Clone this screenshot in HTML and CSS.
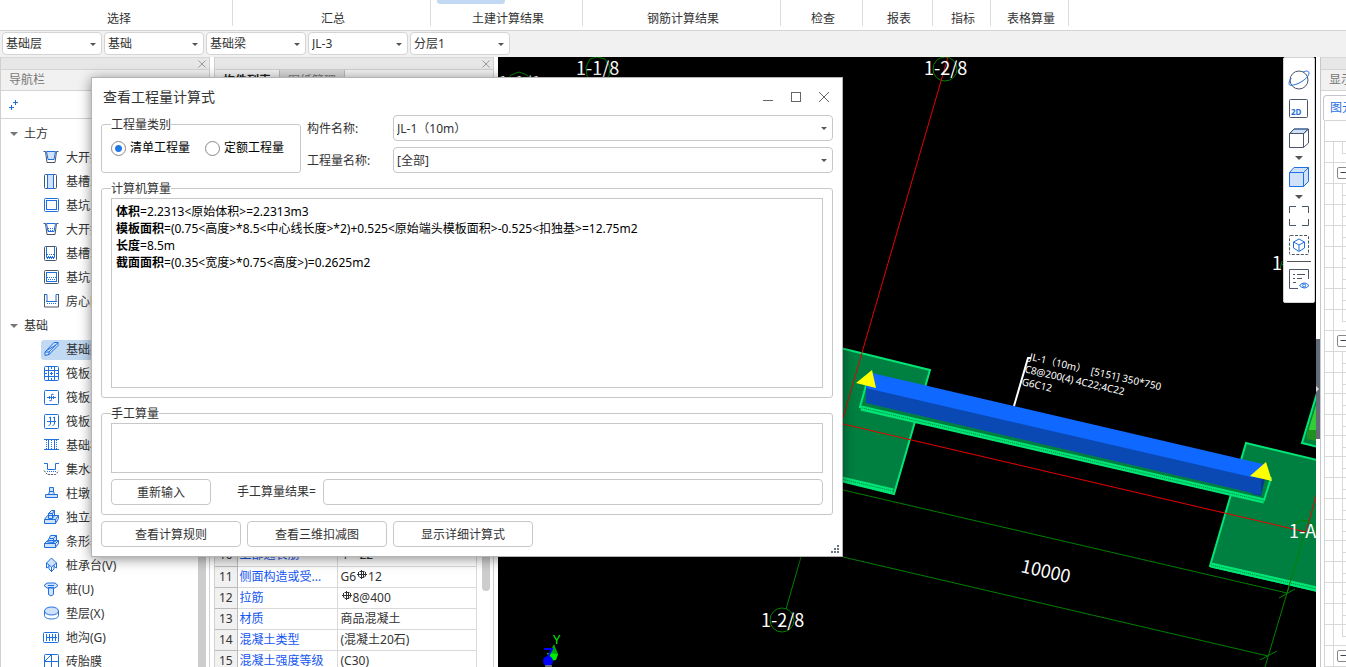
FILE: index.html
```html
<!DOCTYPE html>
<html lang="zh-CN">
<head>
<meta charset="utf-8">
<title>查看工程量计算式</title>
<link rel="stylesheet" href="styles.css">
</head>
<body>
<header class="ribbon">
  <div class="group g-select"><span>选择</span></div>
  <div class="group g-wide"><span>汇总</span></div>
  <div class="group g-civil"><i class="group-active"></i><span>土建计算结果</span></div>
  <div class="group g-wide"><span>钢筋计算结果</span></div>
  <div class="group g-check"><span>检查</span></div>
  <div class="group g-report"><span>报表</span></div>
  <div class="group g-index"><span>指标</span></div>
  <div class="group g-table"><span>表格算量</span></div>
</header>

<div class="filters">
  <span class="select"><select aria-label="楼层"><option>基础层</option></select></span>
  <span class="select"><select aria-label="构件大类"><option>基础</option></select></span>
  <span class="select"><select aria-label="构件类型"><option>基础梁</option></select></span>
  <span class="select"><select aria-label="构件"><option>JL-3</option></select></span>
  <span class="select"><select aria-label="分层"><option>分层1</option></select></span>
</div>

<main class="workspace">
  <aside class="nav">
    <div class="strip"><button class="strip-close" aria-label="关闭"><svg width="8" height="8" viewBox="0 0 8 8"><path d="M.5.5l7 7M7.5.5l-7 7"/></svg></button></div>
    <div class="panel-title">导航栏</div>
    <div class="nav-tools"><button aria-label="展开"><svg width="10" height="10" viewBox="0 0 10 10"><path d="M6.500 0v5M4 2.500h5M2.500 5v5M0 7.500h5" fill="none" stroke="#1a6fe0"/></svg></button></div>
    <div class="nav-body">
      <ul class="tree">
        <li class="branch"><i class="caret"></i>土方</li>
        <li><button class="leaf"><svg viewBox="0 0 16 16"><path class="d" d="M.5 2.500h2l1.500 11h8l1.500-11h2"/><path class="f" d="M3.500 2.500h9l-1.500 8h-6z"/></svg>大开挖土方</button></li>
        <li><button class="leaf"><svg viewBox="0 0 16 16"><rect class="d" x="1.500" y="1.500" width="12" height="14" rx="1"/><path class="f" d="M4.500 1.500h6v14h-6z"/></svg>基槽土方</button></li>
        <li><button class="leaf"><svg viewBox="0 0 16 16"><rect class="b t" x="1.500" y="1.500" width="14" height="13" rx="1"/><rect class="b" x="3.500" y="3.500" width="10" height="9"/></svg>基坑土方</button></li>
        <li><button class="leaf"><svg viewBox="0 0 16 16"><path class="d" d="M.5 2.500h2l1.500 11h8l1.500-11h2"/><path class="b" d="M3.500 2.500h9l-1.500 8h-6z"/><path class="dots" d="M5 7.500h7M5 9.500h6"/></svg>大开挖灰土</button></li>
        <li><button class="leaf"><svg viewBox="0 0 16 16"><rect class="d" x="1.500" y="1.500" width="12" height="14" rx="1"/><path class="b" d="M3.500 1.500v11h8v-11"/><path class="dots" d="M4 9.500h8M5 11.500h7M4 13.500h8"/></svg>基槽灰土</button></li>
        <li><button class="leaf"><svg viewBox="0 0 16 16"><rect class="d" x="1.500" y="1.500" width="14" height="13" rx="1"/><rect class="b" x="3.500" y="3.500" width="10" height="9"/><path class="dots" d="M4 8.500h9M5 10.500h8M4 12.500h9"/></svg>基坑灰土</button></li>
        <li><button class="leaf"><svg viewBox="0 0 16 16"><path class="d" d="M1.500 1v13h14V1"/><path class="b" d="M2 1.500h2v7h9v-7h2"/><path class="dots" d="M3 8.500h11M4 10.500h10"/></svg>房心回填</button></li>
        <li class="branch"><i class="caret"></i>基础</li>
        <li><button class="leaf active"><svg viewBox="0 0 16 16"><path class="f" d="M2 11l9-9.500h4v3L6 13.500l-4 1z"/><path class="b" d="M2 11h4v3M6 11l9-9.500M3.500 9.500L13 4"/></svg>基础梁</button></li>
        <li><button class="leaf"><svg viewBox="0 0 16 16"><rect class="b" x="1.500" y="1.500" width="14" height="14" rx="1"/><path class="b" d="M5.500 2v13M11.500 2v13M1 5.500h14M1 11.500h14M8.500 2v2M8.500 7v3M8.500 13v2M2 8.500h2M7 8.500h3M13 8.500h2"/></svg>筏板基础</button></li>
        <li><button class="leaf"><svg viewBox="0 0 16 16"><rect class="b" x="1.500" y="1.500" width="14" height="14" rx="1"/><path class="b" d="M4 8.500h9M10.500 5.500q-2-1.500-2 1v4q0 2.500-2 1M6.500 7v3M10.500 7v3"/></svg>筏板主筋</button></li>
        <li><button class="leaf"><svg viewBox="0 0 16 16"><rect class="b" x="1.500" y="1.500" width="14" height="14" rx="1"/><path class="b" d="M4 8.500h9M6 5l1.500-1v7l-2 2M10 5l1.500-1v7l-2 2"/></svg>筏板负筋</button></li>
        <li><button class="leaf"><svg viewBox="0 0 16 16"><path class="b" d="M1 2.500h15M1 12.500h15M5.500 3v10M11.500 3v10"/><path class="dots" d="M3.500 3v9M8.500 3v9M13.500 3v9"/></svg>基础板带</button></li>
        <li><button class="leaf"><svg viewBox="0 0 16 16"><path class="b" d="M1 2.500h3.500v6h8v-6H16"/><path class="d" d="M1 9.500l3.500 4h8l3.500-4" stroke-dasharray="2 1"/><path class="dots" d="M4 10.500h9"/></svg>集水坑</button></li>
        <li><button class="leaf"><svg viewBox="0 0 16 16"><path class="f" d="M2.500 9.500h12v3h-12zM5.500 9.500l1-3h4l1 3zM6.500 2.500h4v4h-4z"/></svg>柱墩</button></li>
        <li><button class="leaf"><svg viewBox="0 0 16 16"><path class="f" d="M1.500 10.500l3-4h11v3l-3 5h-11zM5.500 9.500v-5l3-3h3v5l-2 3z"/><path class="b" d="M1.500 10.500h11l3-4M12.500 10.500v4M9.500 9.500v-5l2-3M5.500 4.500h4"/></svg>独立基础</button></li>
        <li><button class="leaf"><svg viewBox="0 0 16 16"><path class="f" d="M1.500 10.500l3-3h11v3l-3 4h-11zM4.500 9l3-6.500h6v5l-3 2z"/><path class="b" d="M1.500 10.500h11l3-3M12.500 10.500v4M6.500 5.500h4l3-3M10.500 5.500v4"/></svg>条形基础</button></li>
        <li><button class="leaf"><svg viewBox="0 0 16 16"><path class="f" d="M8.500 1l5 5-5 4-5-4z"/><path class="b" d="M3.500 6v5l2.500-1.500M13.500 6v5L11 9.500M8.500 10v5M6 8v4l2.500 2.500L11 12V8"/></svg>桩承台(V)</button></li>
        <li><button class="leaf"><svg viewBox="0 0 16 16"><path class="f" d="M1 4.500l3-2.500h8l3 2.500-3 2.500H4zM5.500 6.500h5v7l-2.500 1.500-2.500-1.500z"/><path class="b" d="M5 4.500h6"/></svg>桩(U)</button></li>
        <li><button class="leaf"><svg viewBox="0 0 16 16"><path class="b" d="M1.500 6v4.500c0 2 3 3.500 7 3.500s7-1.500 7-3.500V6"/><ellipse class="f" cx="8.500" cy="6" rx="7" ry="4"/></svg>垫层(X)</button></li>
        <li><button class="leaf"><svg viewBox="0 0 16 16"><rect class="b" x=".5" y="3.500" width="15" height="10" rx="1"/><path class="b" d="M3 8.500h11M3.500 5v7M6.500 5v7M9.500 5v7M12.500 5v7"/></svg>地沟(G)</button></li>
        <li><button class="leaf"><svg viewBox="0 0 16 16"><rect class="b" x="1.500" y="1.500" width="14" height="14" rx="1"/><path class="b" d="M8.500 1v14M1 8.500h15M2 8l6-6"/></svg>砖胎膜</button></li>
      </ul>
      <div class="nav-scroll"></div>
    </div>
  </aside>

  <section class="props">
    <div class="strip"><button class="strip-close" aria-label="关闭"><svg width="8" height="8" viewBox="0 0 8 8"><path d="M.5.5l7 7M7.500.5l-7 7"/></svg></button></div>
    <div class="tabs"><button class="tab on">构件列表</button><button class="tab">图纸管理</button></div>
    <div class="component-list"></div>
    <div class="table-wrap">
      <table>
        <tbody>
          <tr><th>10</th><td class="name">上部通长筋</td><td>4<svg class="rebar" viewBox="0 0 10 10"><path d="M2.500 1.500h5M0 4.500h10M1.500 2v4l1.500 1.500h4l1.500-1.500v-4M4.500 0v9M6.500 1v6"/></svg>22</td></tr>
          <tr><th>11</th><td class="name">侧面构造或受...</td><td>G6<svg class="rebar" viewBox="0 0 10 10"><path d="M2.500 1.500h5M0 4.500h10M1.500 2v4l1.500 1.500h4l1.500-1.500v-4M4.500 0v9M6.500 1v6"/></svg>12</td></tr>
          <tr><th>12</th><td class="name">拉筋</td><td><svg class="rebar" viewBox="0 0 10 10"><path d="M2.500 1.500h5M0 4.500h10M1.500 2v4l1.500 1.500h4l1.500-1.500v-4M4.500 0v9M6.500 1v6"/></svg>8@400</td></tr>
          <tr><th>13</th><td class="name">材质</td><td>商品混凝土</td></tr>
          <tr><th>14</th><td class="name">混凝土类型</td><td>(混凝土20石)</td></tr>
          <tr><th>15</th><td class="name">混凝土强度等级</td><td>(C30)</td></tr>
        </tbody>
      </table>
      <div class="table-scroll"></div>
    </div>
  </section>

  <section class="canvas">
    <svg class="scene" viewBox="498 57 818 610" preserveAspectRatio="xMinYMin slice">
      <g class="axis-green">
        <path d="M843 490L1287 593M843 557L1268 656M801 557L786 609M1305 532L1287 593L1265 667M1279 598L1295 589M1260 660L1277 651"/>
        <path d="M590 59l7-2 8 2 5 8-1 9-7 5h-9l-6-5-1-9zM511 75l8-3 8 3 5 7-1 9h-24l-1-9z"/>
        <circle cx="945" cy="69" r="12"/>
      </g>
      <g class="slab">
        <path d="M820 343L930 370L894 494L820 476z"/>
        <path d="M1246 443L1330 463V594L1210 566z"/>
        <path d="M1330 350L1302 443L1330 450z"/>
      </g>
      <path d="M1316 405v30h-9z" fill="#33cc33"/><path d="M1308 430h8v11l-9-2z" fill="#219021"/>
      <g class="rim"><path d="M820 474L893 491M1211 565L1330 592"/></g>
      <g class="rim-dots"><path d="M820 474L893 491M1211 565L1330 592"/></g>
      <path class="foot" d="M868 378L860 407L1264 500L1271 478z"/>
      <path class="rim" d="M861 408L1264 501"/>
      <path class="rim-dots" d="M862 408L1264 501"/>
      <path d="M866 386L1254 476L1261 495L866 403z" fill="#0a48b4"/>
      <path d="M1252 475L1267 470L1261 496L1252 494z" fill="#083a94"/>
      <path d="M1250 475h11v20l-11-2z" fill="#0a48b4"/>
      <path d="M872 373L1267 465L1262 478L1251 477L866 388z" fill="#0f68ff"/>
      <path d="M856 383L872 370L876 388zM1250 476L1266 462L1272 481z" fill="#ff0"/>
      <path d="M948 57L843 418M843 424L1306 532L1320 482" stroke="#e80000" fill="none"/>
      <path class="axis-green" d="M1293 525q10-10 20 0M1305 532L1287 593"/>
      <circle class="axis-green" cx="782" cy="620" r="12"/>
      <path class="axis-green" d="M1282 261l-2 8"/>
      <path d="M1031 358h-3L1014 406" stroke="#fff" stroke-width="2" fill="none"/>
      <g class="cad">
        <text x="576" y="75">1-1/8</text>
        <text x="498" y="90">1-1/1</text>
        <text x="924" y="75">1-2/8</text>
        <text x="761" y="627">1-2/8</text>
        <text x="1272" y="270">1-A</text>
        <text x="1289" y="538">1-A</text>
        <text transform="translate(1020 572) rotate(13)">10000</text>
      </g>
      <g class="note" transform="translate(1029 360) rotate(13)">
        <text x="0" y="0">JL-1（10m）&#160; [5151] 350*750</text>
        <text x="-2" y="13">C8@200(4) 4C22;4C22</text>
        <text x="-2" y="26">G6C12</text>
      </g>
      <text x="553" y="644" class="gizmo-y">Y</text>
      <path d="M554 644l4 10-2 5-9-1z" fill="#0a0"/><path d="M547 653l11 1-2 6-6 1z" fill="#0e0"/>
      <path d="M544 649h8l-4 8" stroke="#00f" stroke-width="2" fill="none"/>
      <circle cx="548" cy="661" r="5" fill="#00f"/><path d="M545 666h7" stroke="#ccc"/>
    </svg>
    <div class="view-tools">
      <button aria-label="动态观察"><svg viewBox="0 0 22 22"><circle class="d" cx="11" cy="11" r="9"/><path class="b" d="M15 3c4-1.500 6-1 6 1 0 4-7 9-12 11-5 1.500-8 2-8-.5 0-2 1-4 2.500-5.500"/></svg></button>
      <button aria-label="二维"><svg viewBox="0 0 22 22"><rect class="d" x="1.500" y="1.500" width="18" height="18" rx="1"/><text x="3" y="17" class="two-d">2D</text></svg></button>
      <button aria-label="三维线框"><svg viewBox="0 0 22 22"><path class="f" d="M2 6.500L6 2h14l-4 4.500z"/><path class="d" d="M1.500 6.500h14v14h-14zM15.500 6.500l5-4.500v14l-5 4.500M1.500 6.500L6 2h14"/></svg></button>
      <i class="caret dark"></i>
      <button aria-label="三维着色"><svg viewBox="0 0 22 22"><path class="f" d="M1.500 6.500L6 1.500h14.500v14l-5 5h-14z"/><path class="b" d="M1.500 6.500h14v14M15.500 6.500l5-5"/></svg></button>
      <i class="caret dark"></i>
      <button aria-label="全屏"><svg viewBox="0 0 22 22"><path class="d" d="M1.500 8V1.500H8M14 1.500h6.500V8M20.500 14v6.500H14M8 20.500H1.500V14"/></svg></button>
      <button class="local" aria-label="局部三维"><svg viewBox="0 0 22 22"><rect class="d" x="1.500" y="1.500" width="19" height="19" rx="1" stroke-dasharray="3 1.500"/><path class="b" d="M11 5l5.500 3v6L11 17.500 5.500 14V8zM5.500 8L11 11l5.500-3M11 11v6"/></svg></button>
      <hr>
      <button aria-label="显示设置"><svg viewBox="0 0 22 22"><path class="d" d="M10 20.500H1.500V1.500h19V11M5 6.500h2M9 6.500h8M5 10.500h2M9 10.500h5M5 14.500h3"/><path class="b" d="M11.500 17.500q5-5 9.500 0-4.500 5-9.500 0z"/><circle class="b" cx="16.200" cy="17.500" r="1.500"/></svg></button>
    </div>
  </section>

  <div class="splitter"><button aria-label="折叠"></button></div>

  <aside class="display">
    <div class="strip"></div>
    <div class="panel-title">显示设置</div>
    <div class="display-body">
      <button class="display-tab">图元显示</button>
      <div class="display-head"></div>
      <ul class="grid">
        <li class="last"></li><li class="node"><button aria-label="折叠">−</button></li>
        <li></li><li></li><li></li><li></li><li></li><li></li><li class="last"></li>
        <li class="node"><button aria-label="折叠">−</button></li>
        <li></li><li></li><li></li><li></li><li></li><li></li><li></li><li></li><li></li><li></li><li></li><li></li><li></li><li class="last"></li>
        <li class="node"><button aria-label="折叠">−</button></li>
      </ul>
    </div>
  </aside>
</main>

<div class="dialog" role="dialog" aria-labelledby="dlg-title">
  <div class="titlebar">
    <h1 id="dlg-title">查看工程量计算式</h1>
    <button aria-label="最小化"><svg viewBox="0 0 12 12"><path d="M1 9.500h10"/></svg></button>
    <button aria-label="最大化"><svg viewBox="0 0 12 12"><rect x="1.500" y="1.500" width="9" height="9"/></svg></button>
    <button aria-label="关闭"><svg viewBox="0 0 12 12"><path d="M1 1l10 10M11 1L1 11"/></svg></button>
  </div>
  <div class="dialog-body">
    <div class="top-row">
      <fieldset class="kind">
        <legend>工程量类别</legend>
        <label><input type="radio" name="kind" checked>清单工程量</label>
        <label><input type="radio" name="kind">定额工程量</label>
      </fieldset>
      <div class="form">
        <label for="member">构件名称:</label>
        <span class="select"><select id="member"><option>JL-1（10m）</option></select></span>
        <label for="quantity">工程量名称:</label>
        <span class="select"><select id="quantity"><option>[全部]</option></select></span>
      </div>
    </div>
    <fieldset class="auto">
      <legend>计算机算量</legend>
      <div class="formula">
        <p><b>体积</b>=2.2313&lt;原始体积&gt;=2.2313m3</p>
        <p><b>模板面积</b>=(0.75&lt;高度&gt;*8.5&lt;中心线长度&gt;*2)+0.525&lt;原始端头模板面积&gt;-0.525&lt;扣独基&gt;=12.75m2</p>
        <p><b>长度</b>=8.5m</p>
        <p><b>截面面积</b>=(0.35&lt;宽度&gt;*0.75&lt;高度&gt;)=0.2625m2</p>
      </div>
    </fieldset>
    <fieldset class="manual">
      <legend>手工算量</legend>
      <textarea aria-label="手工算量"></textarea>
      <div class="manual-row">
        <button class="btn">重新输入</button>
        <label for="result">手工算量结果=</label>
        <input id="result" type="text">
      </div>
    </fieldset>
    <div class="actions">
      <button class="btn">查看计算规则</button>
      <button class="btn">查看三维扣减图</button>
      <button class="btn">显示详细计算式</button>
    </div>
  </div>
  <svg class="grip" viewBox="0 0 8 8"><path d="M6 0h2v2H6zM3 3h2v2H3zM6 3h2v2H6zM0 6h2v2H0zM3 6h2v2H3zM6 6h2v2H6z" fill="#6b7280"/></svg>
</div>
</body>
</html>
```
FILE: styles.css
```css
* { box-sizing: border-box; }
body {
  margin: 0;
  height: 100vh;
  display: flex;
  flex-direction: column;
  overflow: hidden;
  background: #fff;
  color: #333;
  font: 12px/16px "Noto Sans", "Noto Sans CJK SC", sans-serif;
}
button, select, input, textarea { font: inherit; color: inherit; margin: 0; }
button { padding: 0; border: 0; background: none; }
ul { list-style: none; margin: 0; padding: 0; }
svg { display: block; }
.d { fill: none; stroke: #4a5568; }
.b { fill: none; stroke: #1f6fe0; }
.f { fill: #cfe2fa; stroke: #1f6fe0; }
.dots { fill: none; stroke: #1f6fe0; stroke-dasharray: 1 1; }

/* ribbon */
.ribbon {
  flex: none;
  display: flex;
  height: 31px;
  padding-bottom: 4px;
  border-bottom: 1px solid #d4d4d4;
}
.group {
  display: flex;
  flex-direction: column;
  justify-content: flex-end;
  border-right: 1px solid #dcdcdc;
  text-align: center;
}
.group span { padding-left: 3px; line-height: 14px; }
.group-active {
  width: 68px;
  height: 4px;
  margin: 0 0 auto 6px;
  border-radius: 0 0 3px 3px;
  background: #c1d9f2;
}
.g-select { width: 233px; padding-left: 3px; }
.g-wide { width: 198px; }
.g-civil { width: 152px; }
.g-check { width: 82px; }
.g-report { width: 70px; }
.g-index { width: 58px; }
.g-table { width: 78px; }

/* drop-downs */
.select { position: relative; display: block; }
.select select {
  display: block;
  width: 100%;
  height: 100%;
  padding: 0 3px;
  appearance: none;
  border: 1px solid #d4d4d4;
  border-radius: 4px;
  background: #fff;
}
.select::after {
  content: "";
  position: absolute;
  right: 6px;
  top: 50%;
  margin-top: -1px;
  border: 3px solid transparent;
  border-top-color: #555;
  border-bottom: 0;
  pointer-events: none;
}
.filters {
  flex: none;
  display: flex;
  gap: 2px;
  height: 26px;
  padding: 1px 2px 2px;
  background: #f1f1f1;
}
.filters .select { width: 100px; }

/* shared panels */
.workspace { flex: 1; display: flex; min-height: 0; }
.strip {
  flex: none;
  display: flex;
  justify-content: flex-end;
  align-items: center;
  height: 12px;
  padding-right: 3px;
  background: #e7e7e7;
  border-top: 1px solid #d8d8d8;
}
.strip-close svg { fill: none; stroke: #999; }
.panel-title {
  flex: none;
  height: 22px;
  padding-left: 8px;
  line-height: 20px;
  color: #777;
  white-space: nowrap;
  background: #f1f1f1;
  border-top: 1px solid #d4d4d4;
  border-bottom: 1px solid #d4d4d4;
}

/* navigation */
.nav {
  flex: none;
  display: flex;
  flex-direction: column;
  width: 210px;
  margin-right: 4px;
  border: solid #d0d0d0;
  border-width: 0 1px;
}
.nav-tools {
  flex: none;
  display: flex;
  align-items: center;
  height: 28px;
  padding-left: 8px;
  border-bottom: 1px solid #d4d4d4;
}
.nav-body { flex: 1; display: flex; min-height: 0; overflow: hidden; }
.tree { flex: 1; padding-top: 3px; }
.tree li { height: 24px; padding: 2px 0; }
.tree .branch { display: flex; align-items: center; gap: 6px; padding-left: 9px; }
.caret {
  width: 8px;
  border: 4px solid transparent;
  border-top-color: #777;
  border-bottom: 0;
}
.leaf {
  display: flex;
  align-items: center;
  gap: 7px;
  width: calc(100% - 40px);
  height: 20px;
  margin-left: 40px;
  padding-left: 2px;
  border-radius: 3px;
  white-space: nowrap;
}
.leaf svg { width: 16px; height: 16px; margin-bottom: 2px; }
.leaf.active { background: #c1d9f2; }
.nav-scroll { width: 8px; margin-right: 3px; background: #cdcdcd; }

/* properties */
.props {
  flex: none;
  display: flex;
  flex-direction: column;
  width: 280px;
  margin-right: 4px;
  border: solid #d0d0d0;
  border-width: 0 1px;
}
.tabs {
  flex: none;
  display: flex;
  height: 21px;
  background: #f1f1f1;
  border-top: 1px solid #d0d0d0;
}
.tab {
  width: 65px;
  padding-top: 2px;
  border-right: 1px solid #bbb;
  background: #d9d9d9;
  color: #777;
}
.tab.on { background: #f1f1f1; color: #222; font-weight: 700; }
.component-list { flex: none; height: 455px; }
.table-wrap { flex: 1; display: flex; min-height: 0; overflow: hidden; }
table {
  align-self: flex-start;
  width: 262px;
  border-collapse: collapse;
  table-layout: fixed;
}
th, td {
  height: 21px;
  padding: 0 0 0 3px;
  border: solid #d9d9d9;
  border-width: 0 1px 1px 0;
  text-align: left;
  line-height: 20px;
  white-space: nowrap;
}
th {
  width: 22px;
  padding: 0;
  background: #f1f1f1;
  border-color: #bbb;
  text-align: center;
  font-weight: 400;
}
td.name { width: 100px; padding-left: 2px; color: #1556f0; }
.rebar {
  display: inline-block;
  width: 10px;
  height: 10px;
  margin: 0 1px;
  vertical-align: 1px;
  fill: none;
  stroke: #333;
}
.table-scroll {
  width: 8px;
  height: 46px;
  margin-left: 5px;
  border-radius: 0 0 4px 4px;
  background: #cdcdcd;
}

/* drawing area */
.canvas { position: relative; flex: 1; min-width: 0; overflow: hidden; background: #000; }
.scene { width: 100%; height: 100%; }
.axis-green { fill: none; stroke: #008000; }
.slab path { fill: #008040; stroke: #00e676; stroke-width: 2; }
.foot { fill: #008040; stroke: #00e676; stroke-width: 2; }
.rim { fill: none; stroke: #00e676; stroke-width: 5; }
.rim-dots { fill: none; stroke: #008040; stroke-dasharray: 1 1; }
.cad { fill: #fff; font: 18px "Noto Sans CJK SC", sans-serif; }
.note { fill: #fff; font: 10px "Noto Sans", "Noto Sans CJK SC", sans-serif; }
.gizmo-y { fill: #0e0; font: 13px "Noto Sans", sans-serif; }
.view-tools {
  position: absolute;
  top: 0;
  right: 1px;
  display: flex;
  flex-direction: column;
  align-items: center;
  width: 32px;
  height: 246px;
  padding-top: 11px;
  border: 1px solid #d4d4d4;
  border-radius: 2px;
  background: #fff;
}
.view-tools svg { width: 22px; height: 22px; }
.view-tools button { height: 22px; margin-bottom: 7px; }
.view-tools .caret { margin: 0 0 6px; }
.view-tools .local { margin-bottom: 5px; }
.caret.dark { border-top-color: #555; }
.view-tools hr { width: 24px; margin: 0 0 6px; border: 0; border-top: 1px solid #555; }
.two-d { fill: #1f6fe0; font: 700 8px "Noto Sans", sans-serif; }

.splitter { flex: none; display: flex; width: 4px; padding-top: 282px; }
.splitter button {
  display: flex;
  align-items: center;
  width: 4px;
  height: 100px;
  background: #636b78;
}
.splitter button::before {
  content: "";
  border: 3px solid transparent;
  border-left-color: #ddd;
  border-right: 0;
}

/* display settings */
.display { flex: none; display: flex; flex-direction: column; width: 26px; overflow: hidden; border-left: 1px solid #c4c8ce; }
.display-body { flex: 1; padding: 4px 0 0 2px; min-height: 0; overflow: hidden; }
.display-tab {
  display: block;
  width: 80px;
  height: 25px;
  padding-left: 6px;
  border: 1px solid #c4c8ce;
  border-bottom: 0;
  border-radius: 4px 0 0 0;
  color: #1f6fe0;
  text-align: left;
}
.display-head { height: 22px; margin-left: 1px; border: solid #d4d4d4; border-width: 1px 0 1px 1px; }
.grid { margin-left: 1px; border-left: 1px solid #d4d4d4; }
.grid li {
  display: grid;
  grid-template-columns: 8px 9px 1fr;
  height: 21px;
  border-bottom: 1px solid #d9d9d9;
  background: linear-gradient(#d9d9d9, #d9d9d9) 17px 0 / 1px 100% no-repeat;
}
.grid li.last, .grid li.node { background: none; }
.grid li::before { content: ""; grid-column: 2; grid-row: 1; border-left: 1px solid #d9d9d9; }
.grid li::after { content: ""; grid-column: 3; height: 11px; border: solid #d9d9d9; border-width: 0 0 1px 1px; }
.grid li.node::after { content: none; }
.grid .node button {
  grid-column: 3;
  grid-row: 1;
  align-self: center;
  width: 13px;
  height: 12px;
  margin-left: -5px;
  border: 1px solid #888;
  border-radius: 2px;
  background: #fff;
  line-height: 8px;
}

/* dialog */
.dialog {
  position: absolute;
  left: 91px;
  top: 77px;
  width: 752px;
  padding: 0 9px 9px;
  border: 1px solid #b4b4b4;
  background: #fff;
  box-shadow: 0 2px 12px rgba(0, 0, 0, .45);
}
.titlebar { display: flex; align-items: center; gap: 16px; height: 37px; padding: 0 3px 0 2px; }
.titlebar h1 { flex: 1; margin: 0; font-size: 14px; font-weight: 400; }
.titlebar svg { width: 12px; height: 12px; fill: none; stroke: #666; }
fieldset {
  min-width: 0;
  margin: 0;
  padding: 2px 9px 9px;
  border: 1px solid #c8c8c8;
  border-radius: 3px;
}
legend { height: 16px; padding: 0; line-height: 18px; }
.top-row { display: grid; grid-template-columns: 200px 1fr; gap: 6px; }
.kind { display: flex; gap: 15px; height: 57px; margin-top: 1px; padding: 8px 9px; }
.kind label { display: flex; align-items: center; gap: 4px; height: 16px; color: #000; white-space: nowrap; }
.kind input {
  width: 15px;
  height: 15px;
  appearance: none;
  border: 1px solid #888;
  border-radius: 50%;
}
.kind input:checked { background: radial-gradient(circle, #1f78e6 3px, #fff 4px); }
.form {
  display: grid;
  grid-template-columns: 80px 1fr;
  grid-auto-rows: 26px;
  gap: 6px;
}
.form label { line-height: 28px; }
.form .select select, .btn, .manual input, .manual textarea, .formula { border: 1px solid #c8c8c8; }
.form .select select { padding-top: 2px; }
.auto { margin-top: 7px; }
.formula { height: 190px; padding: 4px; color: #000; line-height: 17px; }
.formula p { margin: 0; }
.manual { margin-top: 7px; }
.manual textarea { display: block; width: 100%; height: 50px; resize: none; background: #fff; }
.manual-row { display: flex; align-items: center; margin-top: 6px; }
.manual-row .btn { width: 100px; }
.manual-row label { margin: 0 7px 0 26px; line-height: 24px; }
.manual-row input { flex: 1; height: 26px; border-radius: 4px; }
.btn { width: 140px; height: 26px; padding-top: 2px; border-radius: 4px; background: #fff; }
.actions { display: flex; gap: 6px; margin-top: 6px; }
.grip { position: absolute; right: 3px; bottom: 3px; width: 8px; height: 8px; }
```
